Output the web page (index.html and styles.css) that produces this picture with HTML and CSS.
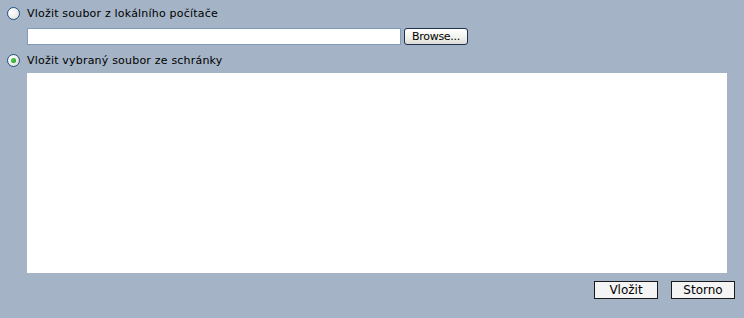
FILE: index.html
```html
<!DOCTYPE html>
<html lang="cs">
<head>
<meta charset="utf-8">
<title>Vložit soubor</title>
<link rel="stylesheet" href="styles.css">
</head>
<body>
<div class="page">
  <label class="option">
    <span class="radio"></span>
    <span class="label-text">Vložit soubor z lokálního počítače</span>
  </label>
  <div class="file-row">
    <span class="file-input"></span>
    <span class="browse">Browse...</span>
  </div>
  <label class="option option-second">
    <span class="radio radio-checked"></span>
    <span class="label-text">Vložit vybraný soubor ze schránky</span>
  </label>
  <div class="clipboard"></div>
  <div class="actions">
    <span class="btn">Vložit</span>
    <span class="btn">Storno</span>
  </div>
</div>
</body>
</html>
```

FILE: styles.css
```css
html, body {
  margin: 0;
  padding: 0;
  background: #a4b4c6;
  height: 100%;
}
.page {
  padding: 7px 9px 0 7px;
  font-family: "DejaVu Sans", Verdana, sans-serif;
  font-size: 11px;
  color: #000;
}
.option {
  display: flex;
  align-items: center;
  gap: 7px;
  height: 13px;
}
.option-second {
  margin-top: 9px;
}
.radio {
  box-sizing: border-box;
  width: 13px;
  height: 13px;
  border-radius: 50%;
  border: 1px solid #1d5281;
  background: radial-gradient(circle at 35% 35%, #ffffff 0%, #f2f2ee 45%, #d6d6cf 100%);
  display: flex;
  align-items: center;
  justify-content: center;
}
.radio-checked::after {
  content: "";
  width: 5px;
  height: 5px;
  border-radius: 50%;
  background: radial-gradient(circle at 40% 40%, #5fd05f 0%, #21a121 70%);
}
.label-text {
  line-height: 13px;
  letter-spacing: 0.2px;
}
.file-row {
  display: flex;
  gap: 3px;
  margin-top: 8px;
  padding-left: 20px;
}
.file-input {
  box-sizing: border-box;
  width: 374px;
  height: 17px;
  border: 1px solid #7f9db9;
  background: #fff;
}
.browse {
  box-sizing: border-box;
  width: 64px;
  height: 17px;
  border: 1px solid #1c3150;
  border-radius: 3px;
  background: linear-gradient(#ffffff, #f1f1ec 60%, #dcdcd4);
  display: flex;
  align-items: center;
  justify-content: center;
  font-family: "DejaVu Sans", Tahoma, sans-serif;
  font-size: 11px;
  letter-spacing: -0.3px;
}
.clipboard {
  margin: 6px 8px 0 20px;
  height: 200px;
  background: #fff;
}
.actions {
  display: flex;
  justify-content: flex-end;
  gap: 13px;
  margin-top: 8px;
}
.btn {
  box-sizing: border-box;
  width: 64px;
  height: 18px;
  border: 1px solid #1a1a1a;
  background: #f4f4f4;
  display: flex;
  align-items: center;
  justify-content: center;
  font-size: 12px;
}
```
